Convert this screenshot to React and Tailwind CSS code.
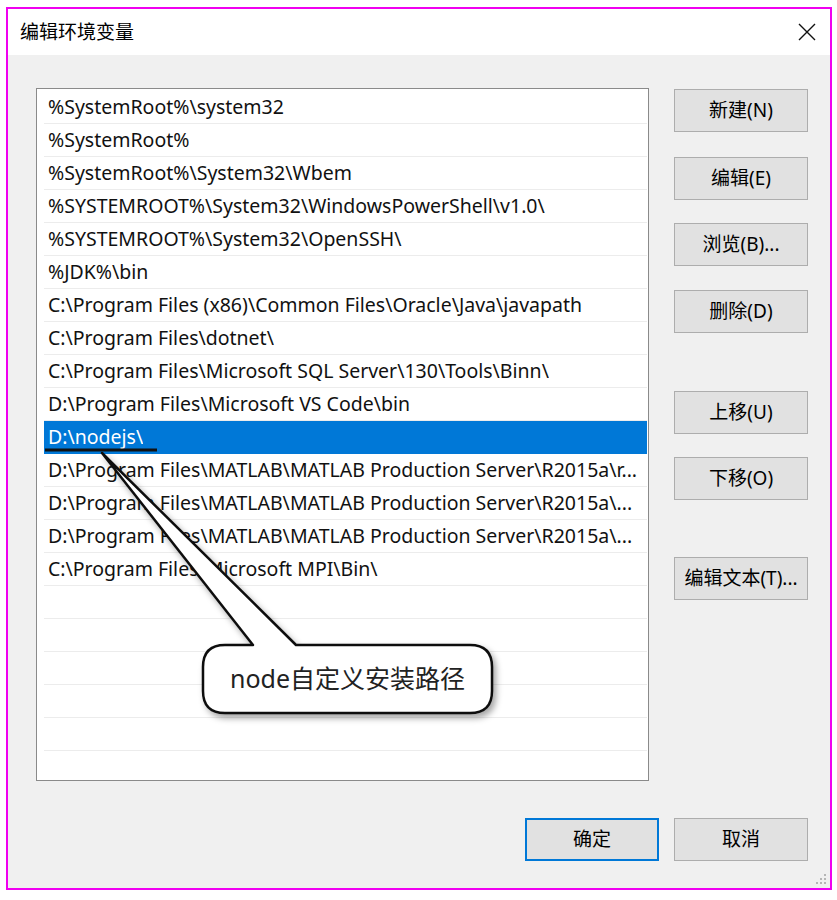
import React from "react";

const paths = [
  "%SystemRoot%\\system32",
  "%SystemRoot%",
  "%SystemRoot%\\System32\\Wbem",
  "%SYSTEMROOT%\\System32\\WindowsPowerShell\\v1.0\\",
  "%SYSTEMROOT%\\System32\\OpenSSH\\",
  "%JDK%\\bin",
  "C:\\Program Files (x86)\\Common Files\\Oracle\\Java\\javapath",
  "C:\\Program Files\\dotnet\\",
  "C:\\Program Files\\Microsoft SQL Server\\130\\Tools\\Binn\\",
  "D:\\Program Files\\Microsoft VS Code\\bin",
  "D:\\nodejs\\",
  "D:\\Program Files\\MATLAB\\MATLAB Production Server\\R2015a\\r...",
  "D:\\Program Files\\MATLAB\\MATLAB Production Server\\R2015a\\...",
  "D:\\Program Files\\MATLAB\\MATLAB Production Server\\R2015a\\...",
  "C:\\Program Files\\Microsoft MPI\\Bin\\",
];

const SELECTED = 10;
const font = { fontFamily: '"Noto Sans", "Noto Sans CJK SC", sans-serif' };

function Btn({ children, className = "", primary = false }) {
  return (
    <div
      className={`w-[134px] h-[43px] flex items-center justify-center bg-[#e1e1e1] text-[19px] text-black ${
        primary ? "border-2 border-[#0078d7]" : "border border-[#adadad]"
      } ${className}`}
    >
      {children}
    </div>
  );
}

export default function App() {
  const rows = [...paths, ...Array(6).fill("")];

  return (
    <div className="relative w-[837px] h-[900px] bg-white pt-[7px] pl-[6px] overflow-hidden" style={font}>
      <div className="w-[826px] h-[883px] border-2 border-[#f000f0] flex flex-col">
        {/* title bar */}
        <div className="h-[46px] bg-white flex items-center justify-between pl-[12px] pr-[14px]">
          <span className="text-[19px] text-black">编辑环境变量</span>
          <svg width="18" height="18" viewBox="0 0 18 18">
            <path d="M1 1 L17 17 M17 1 L1 17" stroke="#111" strokeWidth="1.4" />
          </svg>
        </div>

        {/* body */}
        <div className="flex-1 bg-[#f0f0f0] relative pt-[33px] pl-[28px] pr-[22px]">
          <div className="flex gap-[25px]">
            <div className="w-[613px] h-[693px] bg-white border border-[#8a8a8a] pt-[2px] pl-[7px] pr-[1px] overflow-hidden">
              {rows.map((p, i) => (
                <div
                  key={i}
                  className={`h-[33px] flex items-center px-[4px] border-b text-[19.5px] whitespace-nowrap overflow-hidden ${
                    i === SELECTED
                      ? "bg-[#0078d7] text-white border-[#0078d7]"
                      : "text-[#111] border-[#ececec]"
                  }`}
                >
                  <span className="truncate">{p}</span>
                </div>
              ))}
            </div>

            <div className="flex flex-col">
              <Btn className="mt-[1px]">新建(N)</Btn>
              <Btn className="mt-[25px]">编辑(E)</Btn>
              <Btn className="mt-[23px]">浏览(B)...</Btn>
              <Btn className="mt-[24px]">删除(D)</Btn>
              <Btn className="mt-[58px]">上移(U)</Btn>
              <Btn className="mt-[23px]">下移(O)</Btn>
              <Btn className="mt-[57px]">编辑文本(T)...</Btn>
            </div>
          </div>

          <div className="flex justify-end gap-[15px] mt-[37px]">
            <Btn primary>确定</Btn>
            <Btn>取消</Btn>
          </div>

          {/* resize grip */}
          <svg className="absolute right-[3px] bottom-[3px]" width="12" height="12" viewBox="0 0 12 12">
            {[[9, 1], [5, 5], [9, 5], [1, 9], [5, 9], [9, 9]].map(([x, y], k) => (
              <rect key={k} x={x} y={y} width="2" height="2" fill="#b5b5b5" />
            ))}
          </svg>
        </div>
      </div>

      {/* annotation callout */}
      <svg className="absolute left-0 top-0 pointer-events-none" width="837" height="900" viewBox="0 0 837 900">
        <defs>
          <filter id="sh" x="-20%" y="-20%" width="140%" height="140%">
            <feDropShadow dx="3" dy="4" stdDeviation="3" floodColor="#000" floodOpacity="0.35" />
          </filter>
        </defs>
        <line x1="45" y1="450" x2="157" y2="450" stroke="#111" strokeWidth="3" />
        <path
          d="M225 645 L253 645 L102 453 L296 645 L470 645 Q492 645 492 667 L492 691 Q492 713 470 713 L225 713 Q203 713 203 691 L203 667 Q203 645 225 645 Z"
          fill="#fff"
          stroke="#111"
          strokeWidth="2.5"
          strokeLinejoin="round"
          filter="url(#sh)"
        />
      </svg>
      <div className="absolute left-[203px] top-[645px] w-[289px] h-[68px] flex items-center justify-center text-[25px] text-[#222]">
        node自定义安装路径
      </div>
    </div>
  );
}
